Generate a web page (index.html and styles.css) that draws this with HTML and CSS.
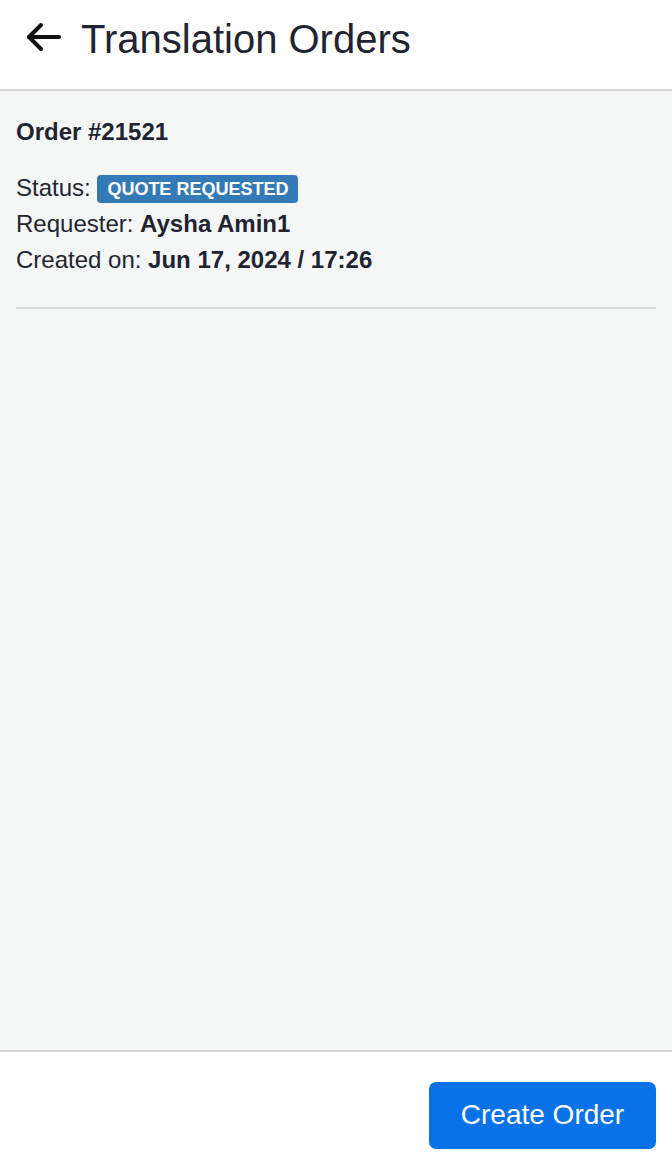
FILE: index.html
```html
<!DOCTYPE html>
<html lang="en">
<head>
<meta charset="utf-8">
<title>Translation Orders</title>
<link rel="stylesheet" href="styles.css">
</head>
<body>
<div class="page">
  <header class="topbar">
    <button class="back" aria-label="Back">
      <svg width="36" height="30" viewBox="0 0 36 30" fill="none" stroke="currentColor" stroke-width="4" stroke-linecap="round" stroke-linejoin="round">
        <line x1="3" y1="15" x2="33" y2="15"/>
        <polyline points="15,3 3,15 15,27"/>
      </svg>
    </button>
    <h1 class="title">Translation Orders</h1>
  </header>
  <main class="content">
    <section class="order">
      <h2 class="order-title">Order #21521</h2>
      <div class="details">
        <div class="row">Status: <span class="badge">QUOTE REQUESTED</span></div>
        <div class="row">Requester: <strong>Aysha Amin1</strong></div>
        <div class="row">Created on: <strong>Jun 17, 2024 / 17:26</strong></div>
      </div>
    </section>
  </main>
  <footer class="footer">
    <button class="primary">Create Order</button>
  </footer>
</div>
</body>
</html>
```

FILE: styles.css
```css
* { box-sizing: border-box; }
html, body { margin: 0; padding: 0; }
body {
  font-family: "Liberation Sans", Arial, Helvetica, sans-serif;
  color: #1f2430;
  background: #ffffff;
}
.page {
  display: flex;
  flex-direction: column;
  min-height: 100vh;
  height: 1162px;
}
.topbar {
  display: flex;
  align-items: flex-start;
  height: 91px;
  padding: 16px 16px 0 26px;
  border-bottom: 2px solid #d4d4d4;
  background: #fff;
}
.back {
  border: 0;
  background: none;
  padding: 0;
  margin: 6px 0 0 0;
  width: 36px;
  height: 30px;
  color: #111;
  display: flex;
}
.title {
  margin: 0 0 0 19px;
  font-size: 40px;
  font-weight: 400;
  line-height: 46px;
  color: #1f2430;
}
.content {
  flex: 1;
  background: #f5f7f7;
  border-bottom: 2px solid #d4d4d4;
  padding: 0 16px;
}
.order {
  padding-top: 23px;
  border-bottom: 2px solid #d6d6d6;
  padding-bottom: 29px;
}
.order-title {
  margin: 0 0 20px 0;
  font-size: 24px;
  font-weight: 700;
  line-height: 36px;
}
.details {
  display: flex;
  flex-direction: column;
}
.row {
  font-size: 24px;
  line-height: 36px;
}
.row strong { font-weight: 700; }
.badge {
  display: inline-block;
  background: #337ab7;
  color: #fff;
  font-size: 18px;
  font-weight: 700;
  line-height: 1;
  padding: 5px 10px 5px;
  border-radius: 4px;
  vertical-align: 1px;
}
.footer {
  height: 110px;
  flex: 0 0 110px;
  display: flex;
  justify-content: flex-end;
  align-items: flex-start;
  padding: 30px 16px 0 16px;
  background: #fff;
}
.primary {
  border: 0;
  border-radius: 7px;
  background: #0a72e8;
  color: #fff;
  font-family: "Liberation Sans", Arial, Helvetica, sans-serif;
  font-size: 28px;
  line-height: 40px;
  padding: 13px 20px 14px;
  width: 227px;
  height: 67px;
}
```
